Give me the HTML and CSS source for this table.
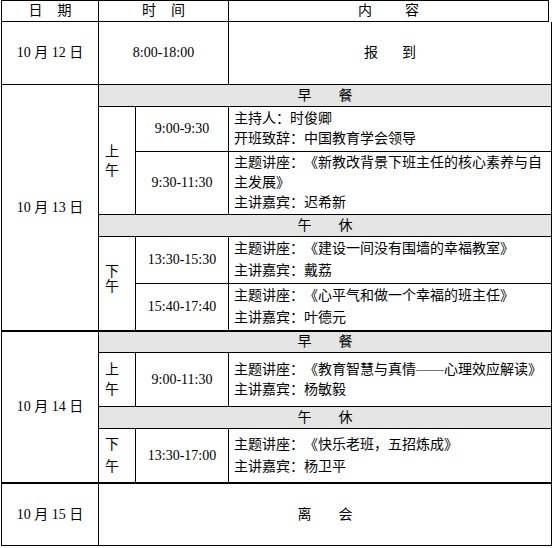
FILE: index.html
```html
<!DOCTYPE html>
<html lang="zh-CN">
<head>
<meta charset="utf-8">
<title>日程安排</title>
<link rel="stylesheet" href="styles.css">
</head>
<body>
<div class="schedule">
  <div class="cell head"><span class="pair"><span>日</span><span>期</span></span></div>
  <div class="cell head span2"><span class="pair"><span>时</span><span>间</span></span></div>
  <div class="cell head head-last"><span class="pair pair-wide"><span>内</span><span>容</span></span></div>

  <div class="cell">10 月 12 日</div>
  <div class="cell span2">8:00-18:00</div>
  <div class="cell"><span class="pair pair-mid"><span>报</span><span>到</span></span></div>

  <div class="cell rows6 thick">10 月 13 日</div>
  <div class="cell span3 gray"><span class="pair pair-meal"><span>早</span><span>餐</span></span></div>
  <div class="cell sub rows2 sub-a"><span>上</span><span>午</span></div>
  <div class="cell">9:00-9:30</div>
  <div class="cell body"><p>主持人：时俊卿</p><p>开班致辞：中国教育学会领导</p></div>
  <div class="cell">9:30-11:30</div>
  <div class="cell body"><p>主题讲座：《新教改背景下班主任的核心素养与自主发展》</p><p>主讲嘉宾：迟希新</p></div>
  <div class="cell span3 gray"><span class="pair pair-meal"><span>午</span><span>休</span></span></div>
  <div class="cell sub rows2 sub-b thick"><span>下</span><span>午</span></div>
  <div class="cell">13:30-15:30</div>
  <div class="cell body loose"><p>主题讲座：《建设一间没有围墙的幸福教室》</p><p>主讲嘉宾：戴荔</p></div>
  <div class="cell thick">15:40-17:40</div>
  <div class="cell body loose thick"><p>主题讲座：《心平气和做一个幸福的班主任》</p><p>主讲嘉宾：叶德元</p></div>

  <div class="cell rows4 thick">10 月 14 日</div>
  <div class="cell span3 gray"><span class="pair pair-meal"><span>早</span><span>餐</span></span></div>
  <div class="cell sub sub-c"><span>上</span><span>午</span></div>
  <div class="cell">9:00-11:30</div>
  <div class="cell body"><p>主题讲座：《教育智慧与真情——心理效应解读》</p><p>主讲嘉宾：杨敏毅</p></div>
  <div class="cell span3 gray"><span class="pair pair-meal"><span>午</span><span>休</span></span></div>
  <div class="cell sub sub-d thick"><span>下</span><span>午</span></div>
  <div class="cell thick">13:30-17:00</div>
  <div class="cell body loose thick"><p>主题讲座：《快乐老班，五招炼成》</p><p>主讲嘉宾：杨卫平</p></div>

  <div class="cell">10 月 15 日</div>
  <div class="cell span3"><span class="pair pair-meal"><span>离</span><span>会</span></span></div>
</div>
</body>
</html>
```

FILE: styles.css
```css
html, body {
  margin: 0;
  padding: 0;
  background: #ffffff;
}

.schedule {
  display: grid;
  grid-template-columns: 97px 37px 93px 323px;
  grid-template-rows: 22px 63px 22px 45px 63px 22px 47px 48px 21px 54px 22px 55px 62px;
  width: max-content;
  margin-left: 1px;
  border-left: 1px solid #000;
  font-family: "Liberation Serif", "Noto Sans CJK SC", serif;
  font-size: 14px;
  line-height: 20px;
  color: #000;
  text-spacing-trim: space-all;
}

.cell {
  box-sizing: border-box;
  border-right: 1px solid #000;
  border-bottom: 1px solid #000;
  display: flex;
  flex-direction: column;
  justify-content: center;
  align-items: center;
  white-space: nowrap;
}

.head {
  border-top: 1px solid #000;
}

.head-last {
  margin-right: 3px;
}

.span2 { grid-column: span 2; }
.span3 { grid-column: span 3; }
.rows2 { grid-row: span 2; }
.rows4 { grid-row: span 4; }
.rows6 { grid-row: span 6; }

.thick {
  border-bottom-width: 2px;
}

.gray {
  background: #e5e5e5;
}

.pair {
  display: flex;
  gap: 15px;
}

.pair-wide { gap: 33px; }
.pair-mid { gap: 24px; }
.pair-meal { gap: 27px; }

.sub {
  align-items: flex-start;
  padding-left: 6px;
}

.sub-a { line-height: 19px; }
.sub-b { line-height: 15px; padding-bottom: 10px; }
.sub-c { line-height: 20px; }
.sub-d { line-height: 22px; }

.body {
  align-items: flex-start;
  padding: 0 4px 0 5px;
  white-space: normal;
}

.loose {
  line-height: 22px;
}

.body p {
  margin: 0;
}
```
